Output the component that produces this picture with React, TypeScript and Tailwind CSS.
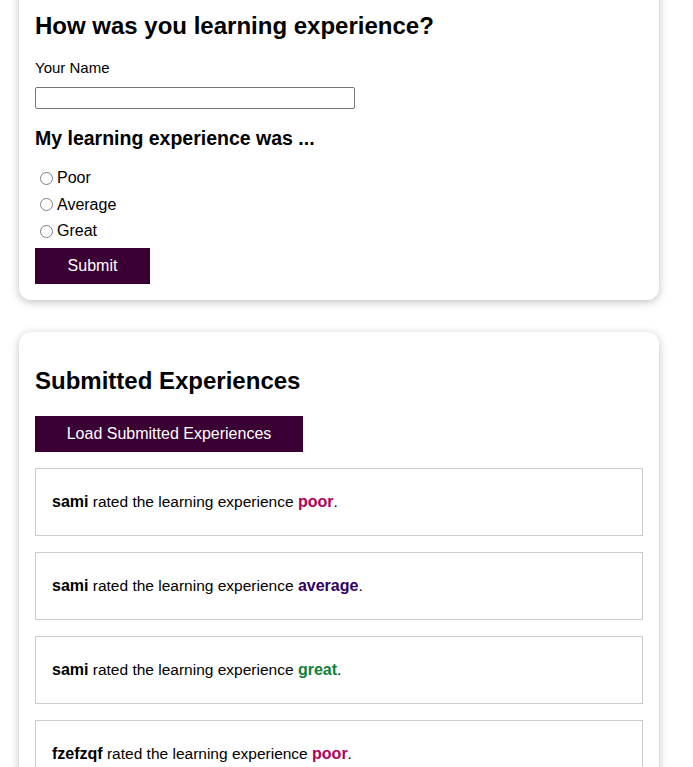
import React from "react";

const items: { name: string; rating: "poor" | "average" | "great" }[] = [
  { name: "sami", rating: "poor" },
  { name: "sami", rating: "average" },
  { name: "sami", rating: "great" },
  { name: "fzefzqf", rating: "poor" },
];

const ratingClass: Record<string, string> = {
  poor: "text-[#b3005a]",
  average: "text-[#2f0066]",
  great: "text-[#0b8235]",
};

export default function App() {
  return (
    <div className="min-h-screen bg-white text-black font-['Liberation_Sans',Arial,sans-serif] px-[19px] overflow-hidden h-[767px]">
      <div className="-mt-[22px] w-[640px] rounded-xl bg-white shadow-[0_2px_8px_rgba(0,0,0,0.25)] px-4 pt-4 pb-4 flex flex-col items-start">
        <h2 className="mt-[18px] text-[24px] leading-[28px] font-bold">How was you learning experience?</h2>
        <label className="mt-[19px] text-[15px] leading-[18px]">Your Name</label>
        <input type="text" className="mt-[10px] w-[320px] h-[22px] border border-[#767676] rounded-[2px] bg-white" />
        <h3 className="mt-[18px] text-[19.5px] leading-[22px] font-bold">My learning experience was ...</h3>
        <div className="mt-[16px] flex flex-col">
          {["Poor", "Average", "Great"].map((l) => (
            <label key={l} className="h-[26.5px] flex items-center text-[16px] leading-[18px]">
              <span className="ml-[5px] mr-[4px] w-[13px] h-[13px] rounded-full border-[1.5px] border-[#7f7f8a] bg-white shrink-0" />
              {l}
            </label>
          ))}
        </div>
        <button className="mt-[3.5px] w-[115px] h-[36px] bg-[#3a0033] text-white text-[16px]">Submit</button>
      </div>

      <div className="mt-8 w-[640px] rounded-xl bg-white shadow-[0_2px_8px_rgba(0,0,0,0.25)] px-4 pt-4 pb-4 flex flex-col items-start">
        <h2 className="mt-[19px] text-[24px] leading-[28px] font-bold">Submitted Experiences</h2>
        <button className="mt-[21px] w-[268px] h-[36px] bg-[#3a0033] text-white text-[16px]">Load Submitted Experiences</button>
        <div className="mt-4 w-full flex flex-col gap-4">
          {items.map((it, i) => (
            <div key={i} className="h-[68px] border border-[#cccccc] px-4 flex items-center leading-[18px]">
              <span className="text-[15.5px]">
                <b className="font-bold text-[16px]">{it.name}</b> rated the learning experience{" "}
                <b className={"font-bold text-[16px] " + ratingClass[it.rating]}>{it.rating}</b>.
              </span>
            </div>
          ))}
        </div>
      </div>
    </div>
  );
}
